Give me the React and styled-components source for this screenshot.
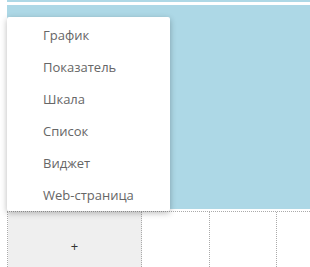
import styled, { createGlobalStyle } from 'styled-components'

const Global = createGlobalStyle`
html,body{margin:0;padding:0;background:#fff;}
body{font-family:"Open Sans","Liberation Sans",sans-serif;}
`

const items = ['График', 'Показатель', 'Шкала', 'Список', 'Виджет', 'Web-страница']

export default function App() {
    return (
        <Page>
            <Global />
            <Strip />
            <Panel>
                <Menu>
                    {items.map(t => <Item key={t}>{t}</Item>)}
                </Menu>
            </Panel>
            <Grid>
                <Cell $span={2} $fill>
                    <Plus>+</Plus>
                </Cell>
                <Cell />
                <Cell />
                <Cell />
            </Grid>
        </Page>
    )
}

const Page = styled.div`
width:310px;
height:267px;
overflow:hidden;
padding-left:7px;
box-sizing:border-box;
`
const Strip = styled.div`
height:2px;
background:#add8e6;
margin-bottom:3px;
`
const Panel = styled.div`
height:204px;
background:#add8e6;
position:relative;
`
const Menu = styled.ul`
position:absolute;
top:12px;
left:0;
width:163px;
margin:0;
padding:2px 0 0 0;
list-style:none;
background:#fff;
border-radius:2px;
box-shadow:0 2px 6px rgba(0,0,0,0.28);
z-index:2;
`
const Item = styled.li`
height:32px;
line-height:32px;
padding-left:36px;
font-size:13px;
color:#666;
`
const Grid = styled.div`
margin-top:2px;
display:grid;
grid-template-columns:67px 67px 68px 67px 67px;
grid-auto-rows:67px;
border-top:1px dotted #aaa;
border-left:1px dotted #aaa;
`
const Cell = styled.div`
grid-column:span ${p => p.$span || 1};
border-right:1px dotted #aaa;
background:${p => p.$fill ? '#efefef' : '#fff'};
display:flex;
align-items:center;
justify-content:center;
`
const Plus = styled.span`
font-size:13px;
color:#333;
`
